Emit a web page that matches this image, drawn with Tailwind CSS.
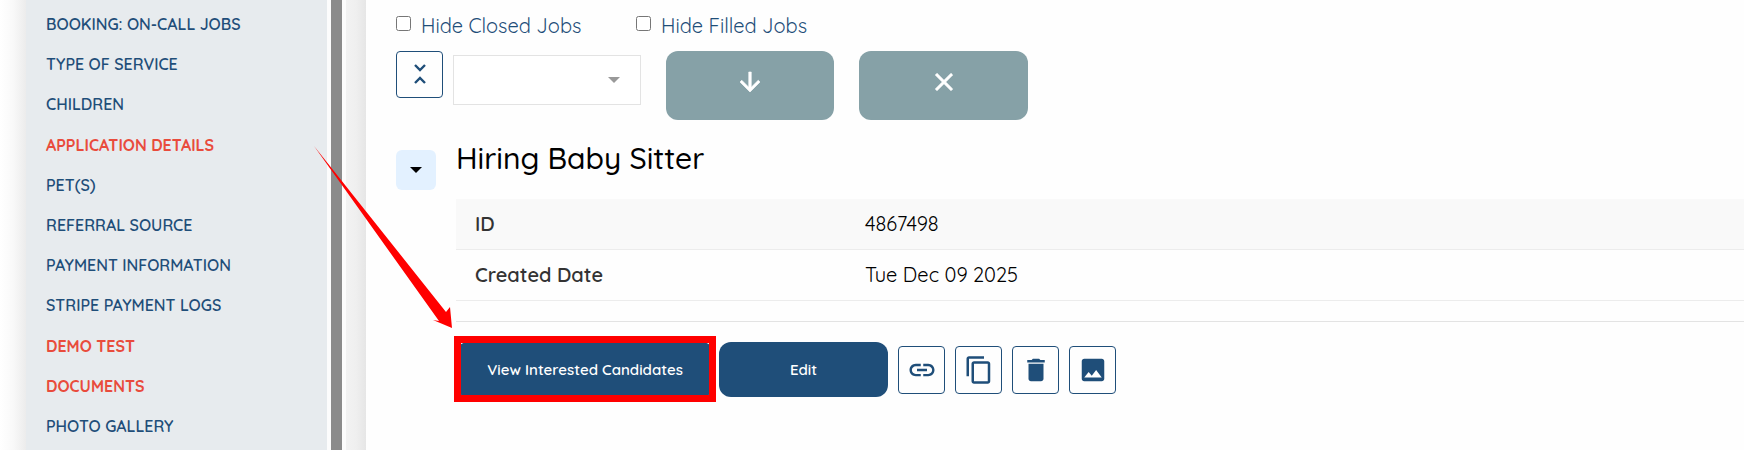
<!DOCTYPE html>
<html lang="en">
<head>
  <meta charset="UTF-8" />
  <meta name="viewport" content="width=device-width, initial-scale=1" />
  <title>Jobs</title>
  <script src="https://cdn.jsdelivr.net/npm/@tailwindcss/browser@4"></script>
</head>
<body class="relative flex min-h-screen overflow-x-hidden bg-white font-['Quicksand','Lato',sans-serif] text-black">
  <!-- Sidebar -->
  <div class="w-[26px] shrink-0 bg-linear-to-r from-white via-[#f9f9f9] to-[#ececec]"></div>
  <nav class="flex w-[301px] shrink-0 flex-col bg-[#e7ebee] py-1 pl-5 text-base font-semibold text-[#1f4e79]">
    <a href="#" class="flex flex-1 items-center">BOOKING: ON-CALL JOBS</a>
    <a href="#" class="flex flex-1 items-center">TYPE OF SERVICE</a>
    <a href="#" class="flex flex-1 items-center">CHILDREN</a>
    <a href="#" class="flex flex-1 items-center font-bold text-[#e94b3c]">APPLICATION DETAILS</a>
    <a href="#" class="flex flex-1 items-center">PET(S)</a>
    <a href="#" class="flex flex-1 items-center">REFERRAL SOURCE</a>
    <a href="#" class="flex flex-1 items-center">PAYMENT INFORMATION</a>
    <a href="#" class="flex flex-1 items-center">STRIPE PAYMENT LOGS</a>
    <a href="#" class="flex flex-1 items-center font-bold text-[#e94b3c]">DEMO TEST</a>
    <a href="#" class="flex flex-1 items-center font-bold text-[#e94b3c]">DOCUMENTS</a>
    <a href="#" class="flex flex-1 items-center">PHOTO GALLERY</a>
  </nav>
  <div class="w-[19px] shrink-0 bg-[#fcfcfc] px-1">
    <div class="h-full bg-[#8b8b8b]"></div>
  </div>
  <div class="w-5 shrink-0 bg-linear-to-r from-[#f2f2f2] via-[#efefef] to-[#e6e6e6]"></div>

  <!-- Content -->
  <main class="min-w-0 flex-1 bg-[#fefefe] pt-3 pl-[30px]">
    <div class="flex h-7 text-xl font-normal text-[#1f4e79]">
      <div class="flex w-60 gap-[10px]">
        <input type="checkbox" id="hideClosed" class="mt-1 size-[15px]" />
        <label for="hideClosed">Hide Closed Jobs</label>
      </div>
      <div class="flex gap-[10px]">
        <input type="checkbox" id="hideFilled" class="mt-1 size-[15px]" />
        <label for="hideFilled">Hide Filled Jobs</label>
      </div>
    </div>

    <div class="mt-[11px] flex items-start">
      <button type="button" aria-label="Collapse all" class="flex size-[47px] items-center justify-center rounded border border-[#1f4e79] text-[#1f4e79]">
        <svg class="size-6" viewBox="0 0 24 24" fill="none" stroke="currentColor" stroke-width="2.4"><path d="M7 2l5 5 5-5M7 20l5-5 5 5" /></svg>
      </button>
      <div class="relative mt-1 ml-[10px] w-[188px]">
        <select aria-label="Sort by" class="h-[50px] w-full appearance-none border border-[#e3e3e3] bg-white px-4">
          <option></option>
        </select>
        <svg class="pointer-events-none absolute top-[22px] right-[21px] h-[6px] w-3" viewBox="0 0 12 6" fill="#999999"><path d="M0 0h12L6 6z" /></svg>
      </div>
      <button type="button" aria-label="Sort descending" class="ml-[25px] flex h-[69px] w-[168px] items-center justify-center rounded-xl bg-[#86a1a7] pb-2 text-white">
        <svg class="size-[30px]" viewBox="0 0 24 24" fill="currentColor" stroke="currentColor" stroke-width=".5"><path d="M20 12l-1.41-1.41L13 16.17V4h-2v12.17l-5.58-5.59L4 12l8 8 8-8z" /></svg>
      </button>
      <button type="button" aria-label="Clear" class="ml-[25px] flex h-[69px] w-[169px] items-center justify-center rounded-xl bg-[#86a1a7] pb-2 text-white">
        <svg class="size-[30px]" viewBox="0 0 24 24" fill="currentColor" stroke="currentColor" stroke-width=".5"><path d="M19 6.41L17.59 5 12 10.59 6.41 5 5 6.41 10.59 12 5 17.59 6.41 19 12 13.41 17.59 19 19 17.59 13.41 12z" /></svg>
      </button>
    </div>

    <section class="mt-5 flex gap-5">
      <button type="button" aria-label="Toggle job" class="mt-[10px] flex size-10 shrink-0 items-center justify-center rounded-md bg-[#e3f1ff]">
        <svg class="h-[6px] w-3" viewBox="0 0 12 6"><path d="M0 0h12L6 6z" /></svg>
      </button>
      <div class="min-w-0 flex-1">
        <h2 class="h-[59px] text-3xl leading-9 font-medium">Hiring Baby Sitter</h2>
        <table class="w-full table-fixed border-separate border-spacing-0 text-left text-xl">
          <tbody>
            <tr class="h-[51px] bg-[#f9f9f9]">
              <th scope="row" class="w-[390px] border-b border-[#ececec] pl-[19px] font-semibold text-[#333333]">ID</th>
              <td class="border-b border-[#ececec] pl-[19px] font-normal">4867498</td>
            </tr>
            <tr class="h-[51px]">
              <th scope="row" class="border-b border-[#ececec] pl-[19px] font-semibold text-[#333333]">Created Date</th>
              <td class="border-b border-[#ececec] pl-[19px] font-normal">Tue Dec 09 2025</td>
            </tr>
          </tbody>
        </table>
        <hr class="mt-5 border-[#e3e3e3]" />
        <div class="mt-5 flex items-center gap-[10px] text-[15px] font-semibold text-white">
          <div class="flex gap-[5px]">
            <div class="relative">
              <button type="button" class="h-[55px] w-[258px] rounded-xl bg-[#1f4e79] pt-[2px]">View Interested Candidates</button>
              <span class="pointer-events-none absolute -inset-x-[2px] -top-[6px] -bottom-[5px] border-[7px] border-[#ff0000]"></span>
            </div>
            <button type="button" class="h-[55px] w-[169px] rounded-xl bg-[#1f4e79] pt-[2px]">Edit</button>
          </div>
          <button type="button" aria-label="Copy link" class="flex h-12 w-[47px] items-center justify-center rounded border border-[#1f4e79] text-[#1f4e79]">
            <svg class="size-[30px]" viewBox="0 0 24 24" fill="currentColor"><path d="M3.9 12c0-1.71 1.39-3.1 3.1-3.1h4V7H7c-2.76 0-5 2.24-5 5s2.24 5 5 5h4v-1.9H7c-1.71 0-3.1-1.39-3.1-3.1zM8 13h8v-2H8v2zm9-6h-4v1.900h4c1.710 0 3.100 1.390 3.100 3.100s-1.390 3.100-3.100 3.100h-4V17h4c2.760 0 5-2.240 5-5s-2.240-5-5-5z" /></svg>
          </button>
          <button type="button" aria-label="Duplicate" class="flex h-12 w-[47px] items-center justify-center rounded border border-[#1f4e79] text-[#1f4e79]">
            <svg class="size-[30px]" viewBox="0 0 24 24" fill="currentColor"><path d="M16 1H4c-1.1 0-2 .9-2 2v14h2V3h12V1zm3 4H8c-1.1 0-2 .9-2 2v14c0 1.100.9 2 2 2h11c1.100 0 2-.9 2-2V7c0-1.100-.9-2-2-2zm0 16H8V7h11v14z" /></svg>
          </button>
          <button type="button" aria-label="Delete" class="flex h-12 w-[47px] items-center justify-center rounded border border-[#1f4e79] text-[#1f4e79]">
            <svg class="size-[30px]" viewBox="0 0 24 24" fill="currentColor"><path d="M6 19c0 1.100.9 2 2 2h8c1.100 0 2-.9 2-2V7H6v12zM19 4h-3.500l-1-1h-5l-1 1H5v2h14V4z" /></svg>
          </button>
          <button type="button" aria-label="Photos" class="flex h-12 w-[47px] items-center justify-center rounded border border-[#1f4e79] text-[#1f4e79]">
            <svg class="size-[30px]" viewBox="0 0 24 24" fill="currentColor"><path d="M21 19V5c0-1.100-.9-2-2-2H5c-1.100 0-2 .9-2 2v14c0 1.100.9 2 2 2h14c1.100 0 2-.9 2-2zM8.500 13.500l2.500 3.010L14.500 12l4.500 6H5l3.500-4.500z" /></svg>
          </button>
        </div>
      </div>
    </section>
  </main>

  <!-- Callout arrow -->
  <svg class="pointer-events-none absolute top-[146px] left-[314px] h-[182px] w-[138px]" viewBox="0 0 138 182" fill="#ff0000"><path d="M0 0L132 166 136 161 138 182 119 174 125 175z" /></svg>
</body>
</html>
